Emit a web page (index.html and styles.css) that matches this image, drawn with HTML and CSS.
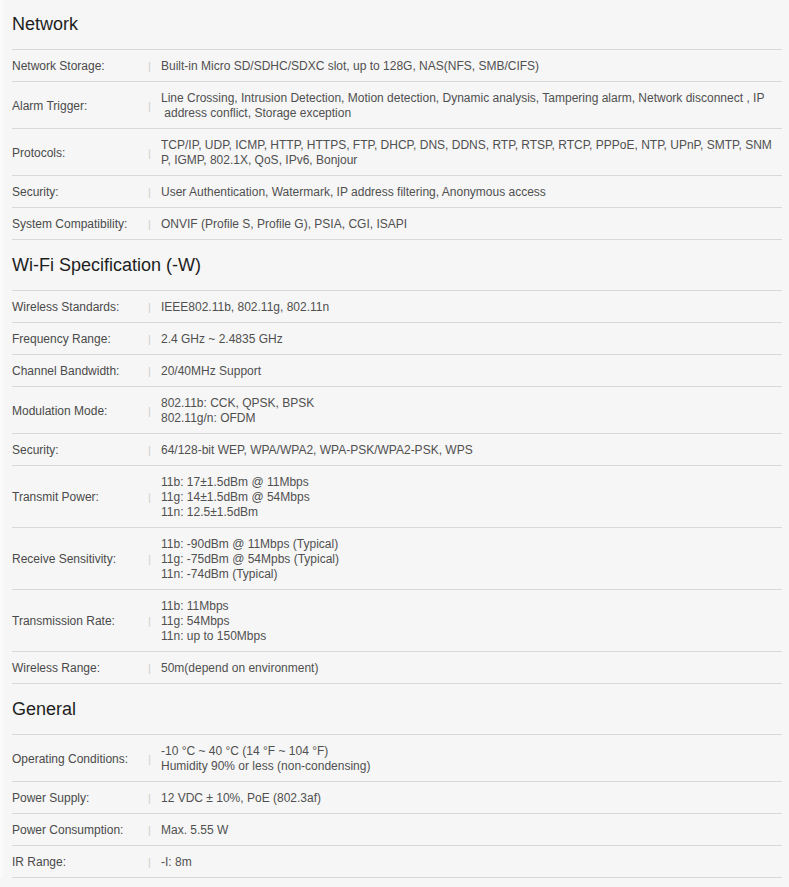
FILE: index.html
```html
<!DOCTYPE html>
<html lang="en">
<head>
    <meta charset="UTF-8">
    <meta name="viewport" content="width=device-width, initial-scale=1.0">
    <title>Specifications</title>
    <link rel="stylesheet" href="styles.css">
</head>
<body>

<div id="specs">
    <h2 class="spec-title">Network</h2>
    <div class="spec-row"><div class="label">Network Storage:</div><span class="sep">|</span><div class="value">Built-in Micro SD/SDHC/SDXC slot, up to 128G, NAS(NFS, SMB/CIFS)</div></div>
    <div class="spec-row"><div class="label">Alarm Trigger:</div><span class="sep">|</span><div class="value">Line Crossing, Intrusion Detection, Motion detection, Dynamic analysis, Tampering alarm, Network disconnect , IP<br>&nbsp;address conflict, Storage exception</div></div>
    <div class="spec-row"><div class="label">Protocols:</div><span class="sep">|</span><div class="value">TCP/IP, UDP, ICMP, HTTP, HTTPS, FTP, DHCP, DNS, DDNS, RTP, RTSP, RTCP, PPPoE, NTP, UPnP, SMTP, SNM<br>P, IGMP, 802.1X, QoS, IPv6, Bonjour</div></div>
    <div class="spec-row"><div class="label">Security:</div><span class="sep">|</span><div class="value">User Authentication, Watermark, IP address filtering, Anonymous access</div></div>
    <div class="spec-row"><div class="label">System Compatibility:</div><span class="sep">|</span><div class="value">ONVIF (Profile S, Profile G), PSIA, CGI, ISAPI</div></div>

    <h2 class="spec-title">Wi-Fi Specification (-W)</h2>
    <div class="spec-row"><div class="label">Wireless Standards:</div><span class="sep">|</span><div class="value">IEEE802.11b, 802.11g, 802.11n</div></div>
    <div class="spec-row"><div class="label">Frequency Range:</div><span class="sep">|</span><div class="value">2.4 GHz ~ 2.4835 GHz</div></div>
    <div class="spec-row"><div class="label">Channel Bandwidth:</div><span class="sep">|</span><div class="value">20/40MHz Support</div></div>
    <div class="spec-row"><div class="label">Modulation Mode:</div><span class="sep">|</span><div class="value">802.11b: CCK, QPSK, BPSK<br>802.11g/n: OFDM</div></div>
    <div class="spec-row"><div class="label">Security:</div><span class="sep">|</span><div class="value">64/128-bit WEP, WPA/WPA2, WPA-PSK/WPA2-PSK, WPS</div></div>
    <div class="spec-row"><div class="label">Transmit Power:</div><span class="sep">|</span><div class="value">11b: 17±1.5dBm @ 11Mbps<br>11g: 14±1.5dBm @ 54Mbps<br>11n: 12.5±1.5dBm</div></div>
    <div class="spec-row"><div class="label">Receive Sensitivity:</div><span class="sep">|</span><div class="value">11b: -90dBm @ 11Mbps (Typical)<br>11g: -75dBm @ 54Mpbs (Typical)<br>11n: -74dBm (Typical)</div></div>
    <div class="spec-row"><div class="label">Transmission Rate:</div><span class="sep">|</span><div class="value">11b: 11Mbps<br>11g: 54Mbps<br>11n: up to 150Mbps</div></div>
    <div class="spec-row"><div class="label">Wireless Range:</div><span class="sep">|</span><div class="value">50m(depend on environment)</div></div>

    <h2 class="spec-title">General</h2>
    <div class="spec-row"><div class="label">Operating Conditions:</div><span class="sep">|</span><div class="value">-10 °C ~ 40 °C (14 °F ~ 104 °F)<br>Humidity 90% or less (non-condensing)</div></div>
    <div class="spec-row"><div class="label">Power Supply:</div><span class="sep">|</span><div class="value">12 VDC ± 10%, PoE (802.3af)</div></div>
    <div class="spec-row"><div class="label">Power Consumption:</div><span class="sep">|</span><div class="value">Max. 5.55 W</div></div>
    <div class="spec-row"><div class="label">IR Range:</div><span class="sep">|</span><div class="value">-I: 8m</div></div>
</div>

</body>
</html>
```

FILE: styles.css
```css
* {
    box-sizing: border-box;
}

body {
    margin: 0;
    background-color: #f6f6f6;
    border-left: 3px solid #fafafa;
    font-family: "Liberation Sans", Arial, sans-serif;
    font-size: 12px;
    color: #4a4a4a;
}

#specs {
    margin: 0 7px 0 9px;
}

.spec-title {
    margin: 0;
    padding: 15px 0;
    font-size: 18px;
    font-weight: normal;
    line-height: 20px;
    color: #1e1e1e;
    border-bottom: 1px solid #d9d9d9;
}

.spec-title:first-child {
    padding-top: 14px;
}

.spec-row {
    display: flex;
    align-items: center;
    padding: 9px 0 7px;
    line-height: 15px;
    border-bottom: 1px solid #d9d9d9;
}

.label {
    width: 135px;
    flex-shrink: 0;
}

.sep {
    width: 14px;
    flex-shrink: 0;
    color: #d0d0d0;
    font-size: 11px;
    padding-left: 1px;
}

.value {
    flex: 1;
    min-width: 0;
    white-space: nowrap; /* breaks are set by hand to follow the original */
    color: #505050;
}
```
